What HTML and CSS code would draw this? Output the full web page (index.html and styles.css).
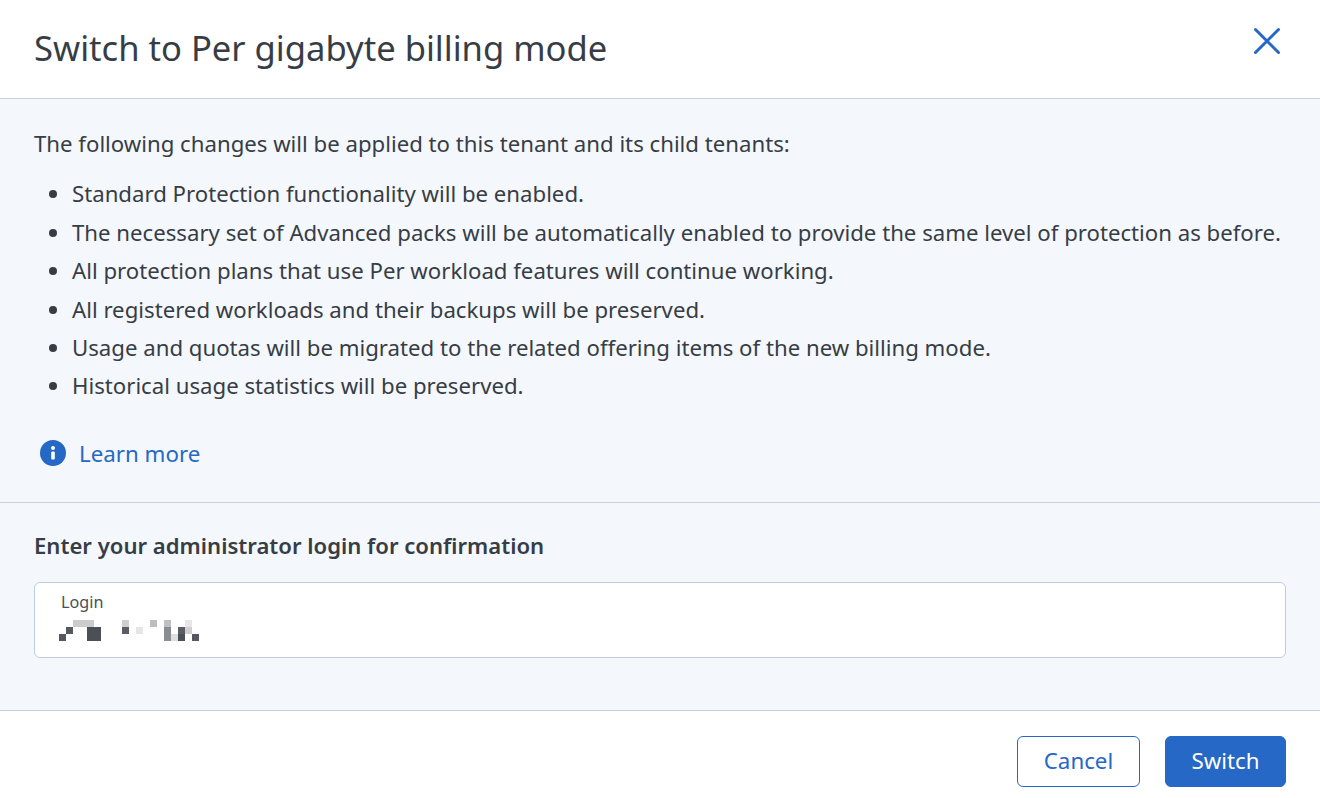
FILE: index.html
```html
<!DOCTYPE html>
<html lang="en">
<head>
<meta charset="utf-8">
<title>Switch to Per gigabyte billing mode</title>
<link rel="stylesheet" href="styles.css">
</head>
<body>
<div class="dialog">
  <header class="head">
    <h1 class="title">Switch to Per gigabyte billing mode</h1>
    <button class="close" aria-label="Close">
      <svg width="28" height="28" viewBox="0 0 28 28"><path d="M2.5 2.5 25.5 25.5M25.5 2.5 2.5 25.5" fill="none" stroke="#2668c5" stroke-width="3" stroke-linecap="round"/></svg>
    </button>
  </header>
  <section class="info">
    <p class="lead">The following changes will be applied to this tenant and its child tenants:</p>
    <ul class="changes">
      <li>Standard Protection functionality will be enabled.</li>
      <li>The necessary set of Advanced packs will be automatically enabled to provide the same level of protection as before.</li>
      <li>All protection plans that use Per workload features will continue working.</li>
      <li>All registered workloads and their backups will be preserved.</li>
      <li>Usage and quotas will be migrated to the related offering items of the new billing mode.</li>
      <li>Historical usage statistics will be preserved.</li>
    </ul>
    <a class="more" href="#">
      <svg width="26" height="26" viewBox="0 0 26 26"><circle cx="13" cy="13" r="13" fill="#2668c5"/><circle cx="13" cy="8" r="2" fill="#fff"/><rect x="11.2" y="11.5" width="3.6" height="8" rx="1" fill="#fff"/></svg>
      <span>Learn more</span>
    </a>
  </section>
  <section class="confirm">
    <h2 class="confirm-title">Enter your administrator login for confirmation</h2>
    <div class="field">
      <div class="field-label">Login</div>
      <svg class="blur" width="140" height="21" viewBox="0 0 140 21" shape-rendering="crispEdges">
        <rect x="14" y="0" width="21" height="7" fill="#cccccd"/>
        <rect x="63" y="0" width="7" height="7" fill="#cfcfd0"/>
        <rect x="91" y="0" width="7" height="7" fill="#bdbdbe"/>
        <rect x="105" y="0" width="7" height="7" fill="#c0c0c1"/>
        <rect x="126" y="0" width="7" height="7" fill="#e6e6e7"/>
        <rect x="7" y="7" width="7" height="7" fill="#55595f"/>
        <rect x="28" y="7" width="14" height="14" fill="#4b5057"/>
        <rect x="63" y="7" width="7" height="7" fill="#5a5e64"/>
        <rect x="77" y="7" width="7" height="7" fill="#e6e6e7"/>
        <rect x="105" y="7" width="7" height="14" fill="#8a8d91"/>
        <rect x="119" y="7" width="7" height="7" fill="#5a5e64"/>
        <rect x="126" y="7" width="7" height="7" fill="#cfcfd0"/>
        <rect x="0" y="14" width="7" height="7" fill="#55595f"/>
        <rect x="112" y="14" width="7" height="7" fill="#dfdfe0"/>
        <rect x="119" y="14" width="7" height="7" fill="#4b5057"/>
        <rect x="133" y="14" width="7" height="7" fill="#55595f"/>
      </svg>
    </div>
  </section>
  <footer class="foot">
    <button class="btn btn-ghost">Cancel</button>
    <button class="btn btn-solid">Switch</button>
  </footer>
</div>
</body>
</html>
```
FILE: styles.css
```css
* { box-sizing: border-box; }
html, body { margin: 0; height: 100%; }
body {
  font-family: "Noto Sans", sans-serif;
  color: #373d45;
  background: #fff;
  width: 1320px;
  height: 798px;
  overflow: hidden;
}
.dialog { display: flex; flex-direction: column; height: 798px; }
.head {
  height: 99px;
  flex: none;
  display: flex;
  justify-content: space-between;
  align-items: flex-start;
  padding: 0 34px;
  border-bottom: 1px solid #c5d1e2;
  background: #fff;
}
.title {
  margin: 25px 0 0;
  font-size: 34.6px;
  line-height: 46px;
  font-weight: 400;
}
.close {
  border: 0;
  background: none;
  padding: 0;
  margin: 27px 5px 0 0;
  width: 28px;
  height: 28px;
  display: block;
}
.info {
  height: 404px;
  flex: none;
  padding: 29px 34px 0;
  background: #f4f7fc;
  border-bottom: 1px solid #c5d1e2;
}
.lead { margin: 0; font-size: 22.2px; line-height: 32px; }
.changes {
  margin: 15.4px 0 0;
  padding: 0 0 0 38px;
  font-size: 22.2px;
  line-height: 38.4px;
}
.changes li { white-space: nowrap; }
.more {
  display: flex;
  align-items: center;
  gap: 13px;
  margin: 31.6px 0 0 6px;
  height: 32px;
  color: #2668c5;
  font-size: 22.3px;
  text-decoration: none;
}
.confirm {
  height: 208px;
  flex: none;
  padding: 26px 34px 0;
  background: #f4f7fc;
  border-bottom: 1px solid #c5d1e2;
}
.confirm-title { margin: 0; font-size: 22.1px; line-height: 32px; font-weight: 600; }
.field {
  margin-top: 21px;
  height: 76px;
  background: #fff;
  border: 1px solid #bccde2;
  border-radius: 6px;
  padding: 7px 0 0 24px;
}
.field-label { font-size: 16.2px; line-height: 24px; margin-left: 2px; color: #4a4f56; }
.blur { display: block; margin-top: 6px; }
.foot {
  flex: 1;
  display: flex;
  justify-content: flex-end;
  gap: 25px;
  padding: 25px 34px 0;
  background: #fff;
}
.btn {
  height: 51px;
  font-family: inherit;
  font-size: 22.3px;
  border-radius: 6px;
  padding: 0 0 2px;
}
.btn-ghost { width: 123px; background: #fff; color: #2668c5; border: 1px solid #2668c5; }
.btn-solid { width: 121px; background: #2668c5; color: #fff; border: 1px solid #2668c5; }
```
